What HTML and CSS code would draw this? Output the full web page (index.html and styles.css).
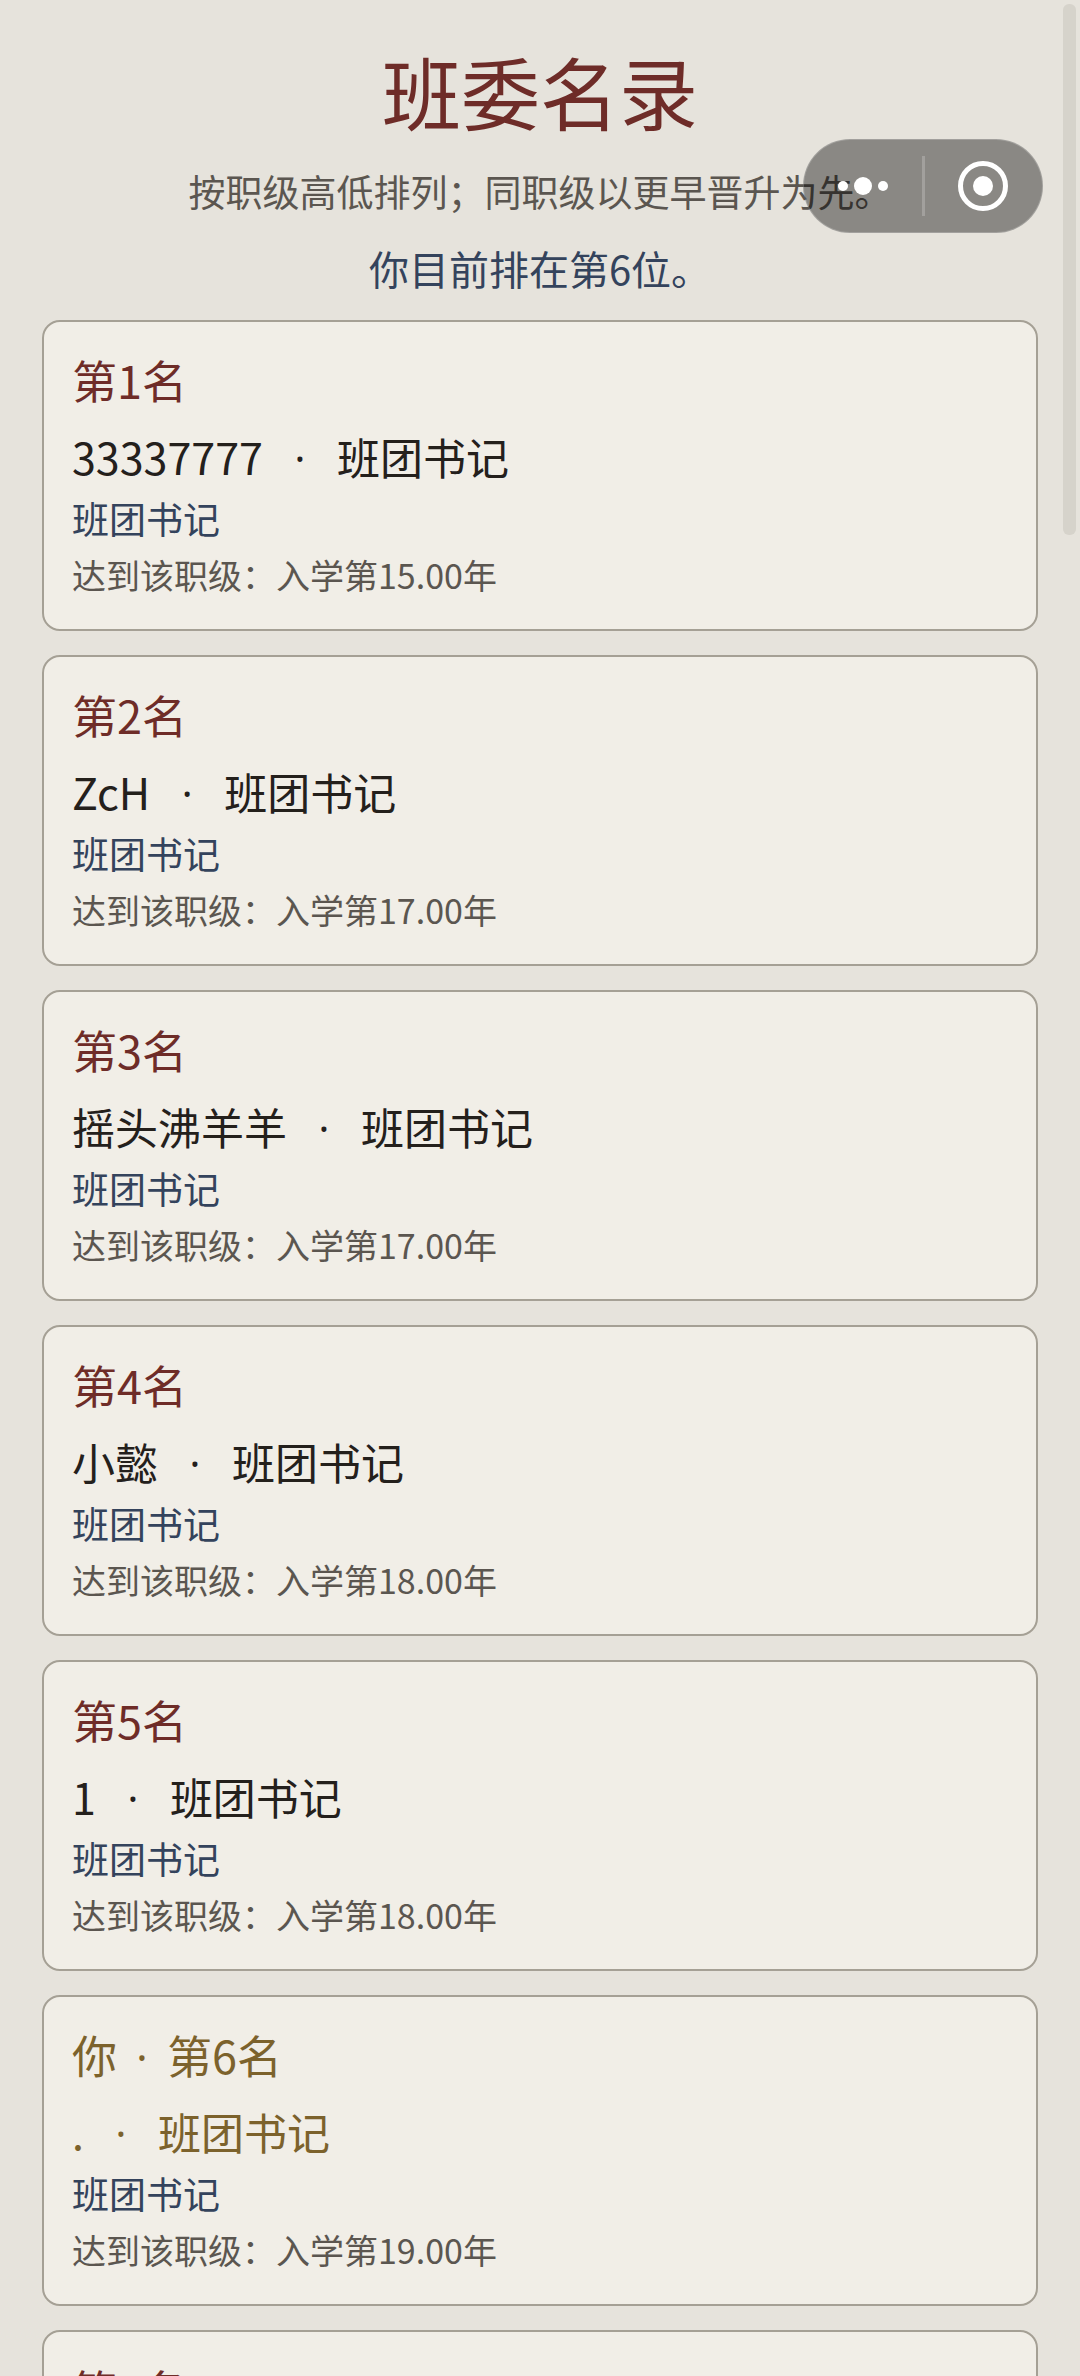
FILE: index.html
```html
<!DOCTYPE html>
<html lang="zh-CN">
<head>
    <meta charset="UTF-8">
    <meta name="viewport" content="width=device-width, initial-scale=1.0">
    <title>班委名录</title>
    <link rel="stylesheet" href="styles.css">
</head>
<body>
    <main class="page">
        <header class="header">
            <h1>班委名录</h1>
            <p class="rule">按职级高低排列；同职级以更早晋升为先。</p>
            <p class="my-rank">你目前排在第6位。</p>
        </header>

        <ol class="list">
            <li class="card">
                <h2>第1名</h2>
                <p class="name">33337777<span class="dot">·</span>班团书记</p>
                <p class="role">班团书记</p>
                <p class="reached">达到该职级：入学第15.00年</p>
            </li>
            <li class="card">
                <h2>第2名</h2>
                <p class="name">ZcH<span class="dot">·</span>班团书记</p>
                <p class="role">班团书记</p>
                <p class="reached">达到该职级：入学第17.00年</p>
            </li>
            <li class="card">
                <h2>第3名</h2>
                <p class="name">摇头沸羊羊<span class="dot">·</span>班团书记</p>
                <p class="role">班团书记</p>
                <p class="reached">达到该职级：入学第17.00年</p>
            </li>
            <li class="card">
                <h2>第4名</h2>
                <p class="name">小懿<span class="dot">·</span>班团书记</p>
                <p class="role">班团书记</p>
                <p class="reached">达到该职级：入学第18.00年</p>
            </li>
            <li class="card">
                <h2>第5名</h2>
                <p class="name">1<span class="dot">·</span>班团书记</p>
                <p class="role">班团书记</p>
                <p class="reached">达到该职级：入学第18.00年</p>
            </li>
            <li class="card me">
                <h2>你<span class="dot">·</span>第6名</h2>
                <p class="name">.<span class="dot">·</span>班团书记</p>
                <p class="role">班团书记</p>
                <p class="reached">达到该职级：入学第19.00年</p>
            </li>
            <li class="card">
                <h2>第7名</h2>
            </li>
        </ol>
    </main>

    <div class="capsule">
        <button type="button" aria-label="更多">
            <svg width="52" height="20" viewBox="0 0 52 20" fill="#fff">
                <circle cx="6" cy="10" r="5"/>
                <circle cx="26" cy="10" r="9"/>
                <circle cx="46" cy="10" r="5"/>
            </svg>
        </button>
        <span class="divider"></span>
        <button type="button" aria-label="关闭">
            <svg width="50" height="50" viewBox="0 0 50 50">
                <circle cx="25" cy="25" r="22.5" fill="none" stroke="#fff" stroke-width="5"/>
                <circle cx="25" cy="25" r="10" fill="#fff"/>
            </svg>
        </button>
    </div>
    <div class="scroll-thumb"></div>
</body>
</html>
```

FILE: styles.css
```css
* {
    box-sizing: border-box;
    margin: 0;
    padding: 0;
}

body {
    font-family: "Noto Sans CJK SC", sans-serif;
    background-color: #e6e3dc;
    color: #24201c;
}

.page {
    height: 100vh;
    padding: 41px 42px 0;
    overflow-y: auto;
    scrollbar-width: none;
}

.header {
    text-align: center;
    margin-bottom: 24px;
}

h1 {
    color: #6e2c28;
    font-size: 79px;
    font-weight: 400;
    line-height: 100px;
    margin-bottom: 22px;
}

.rule {
    color: #5b5650;
    font-size: 37px;
    line-height: 56px;
    margin-bottom: 21px;
}

.my-rank {
    color: #34435c;
    font-size: 40px;
    line-height: 56px;
}

.list {
    display: flex;
    flex-direction: column;
    gap: 24px;
    list-style: none;
}

.card {
    background-color: #f1eee7;
    border: 2px solid #a5a095;
    border-radius: 18px;
    min-height: 311px;
    padding: 28px 28px 30px;
}

h2 {
    color: #6e2c28;
    font-size: 45px;
    font-weight: 400;
    line-height: 60px;
    margin-bottom: 16px;
}

.name {
    font-size: 43px;
    line-height: 60px;
    margin-bottom: 4px;
}

.role {
    color: #34435c;
    font-size: 37px;
    line-height: 56px;
    margin-bottom: 5px;
}

.reached {
    color: #5b5650;
    font-size: 34px;
    line-height: 48px;
}

.dot {
    display: inline-block;
    width: 74px;
    font-family: "Open Sans", sans-serif;
    line-height: 1;
    text-align: center;
}

h2 .dot {
    width: 50px;
}

.me h2,
.me .name {
    color: #7c622c;
}

/* mini program menu, floats over the page */
.capsule {
    position: fixed;
    top: 139px;
    right: 37px;
    display: flex;
    align-items: center;
    width: 240px;
    height: 94px;
    background-color: rgba(0, 0, 0, 0.4);
    border: 1px solid rgba(255, 255, 255, 0.2);
    border-radius: 47px;
}

.capsule button {
    display: flex;
    flex: 1;
    align-items: center;
    justify-content: center;
    height: 100%;
    background: none;
    border: none;
    cursor: pointer;
}

.divider {
    width: 3px;
    height: 60px;
    background-color: rgba(255, 255, 255, 0.2);
}

.scroll-thumb {
    position: fixed;
    top: 4px;
    right: 4px;
    width: 13px;
    height: 531px;
    background-color: #d6d3cb;
    border-radius: 6px;
}
```
